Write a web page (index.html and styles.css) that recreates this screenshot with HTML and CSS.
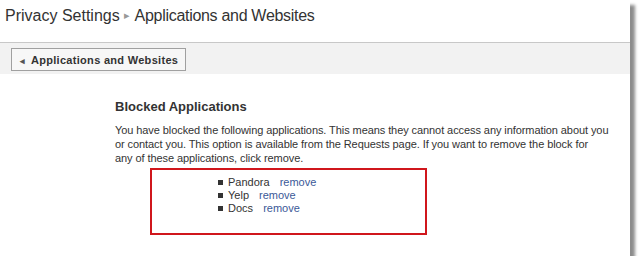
FILE: index.html
```html
<!DOCTYPE html>
<html lang="en">
<head>
  <meta charset="UTF-8" />
  <title>Privacy Settings</title>
  <link rel="stylesheet" href="styles.css">
</head>
<body>
  <div class="page">
    <h1 class="crumbs">Privacy Settings <span class="sep">&#9656;</span> <span class="current">Applications and Websites</span></h1>

    <div class="toolbar">
      <button class="back"><span class="arrow">&#9666;</span> Applications and Websites</button>
    </div>

    <div class="content">
      <h2>Blocked Applications</h2>
      <p>You have blocked the following applications. This means they cannot access any information about you<br>
        or contact you. This option is available from the Requests page. If you want to remove the block for<br>
        any of these applications, click remove.</p>
      <div class="highlight">
        <ul class="apps">
          <li>Pandora <a href="#">remove</a></li>
          <li>Yelp <a href="#">remove</a></li>
          <li>Docs <a href="#">remove</a></li>
        </ul>
      </div>
    </div>
  </div>
</body>
</html>
```

FILE: styles.css
```css
body { margin:0; background:#fff; font-family: "Liberation Sans", Arial, sans-serif; color:#333; }
.page { width:630px; height:256px; background:#fff; box-shadow: 5px 5px 3px rgba(0,0,0,0.45); }
.crumbs { margin:0; padding:7px 5px 0; height:35px; font-size:16px; font-weight:normal; color:#333; }
.crumbs .current { letter-spacing:-0.3px; }
.crumbs .sep { color:#999; font-size:11px; position:relative; top:-2px; }
.toolbar { border-top:1px solid #c8c8c8; background:#f2f2f2; height:32px; padding:5px 0 0 11px; box-sizing:border-box; }
.back { font-family: inherit; font-size:11px; font-weight:bold; letter-spacing:0.3px; color:#333; background:#f7f7f7; border:1px solid #a0a0a0; height:23px; padding:0 7px 0 8px; cursor:pointer; }
.back .arrow { font-size:9px; color:#555; margin-right:3px; letter-spacing:0; }
.content { padding:25px 0 0 115px; }
.content h2 { margin:0 0 9px; font-size:13px; font-weight:bold; color:#333; }
.content p { margin:0; width:520px; font-size:11px; line-height:14px; letter-spacing:-0.08px; }
.highlight { margin:3px 0 0 35px; width:273px; height:63px; border:2px solid #d0161c; }
.apps { margin:0; padding:6px 0 0 66px; list-style:none; font-size:11px; line-height:13px; }
.apps li::before { content:""; display:inline-block; width:5px; height:5px; background:#333; margin-right:5px; vertical-align:1px; }
.apps a { color:#3b5998; text-decoration:none; margin-left:7px; }
```
